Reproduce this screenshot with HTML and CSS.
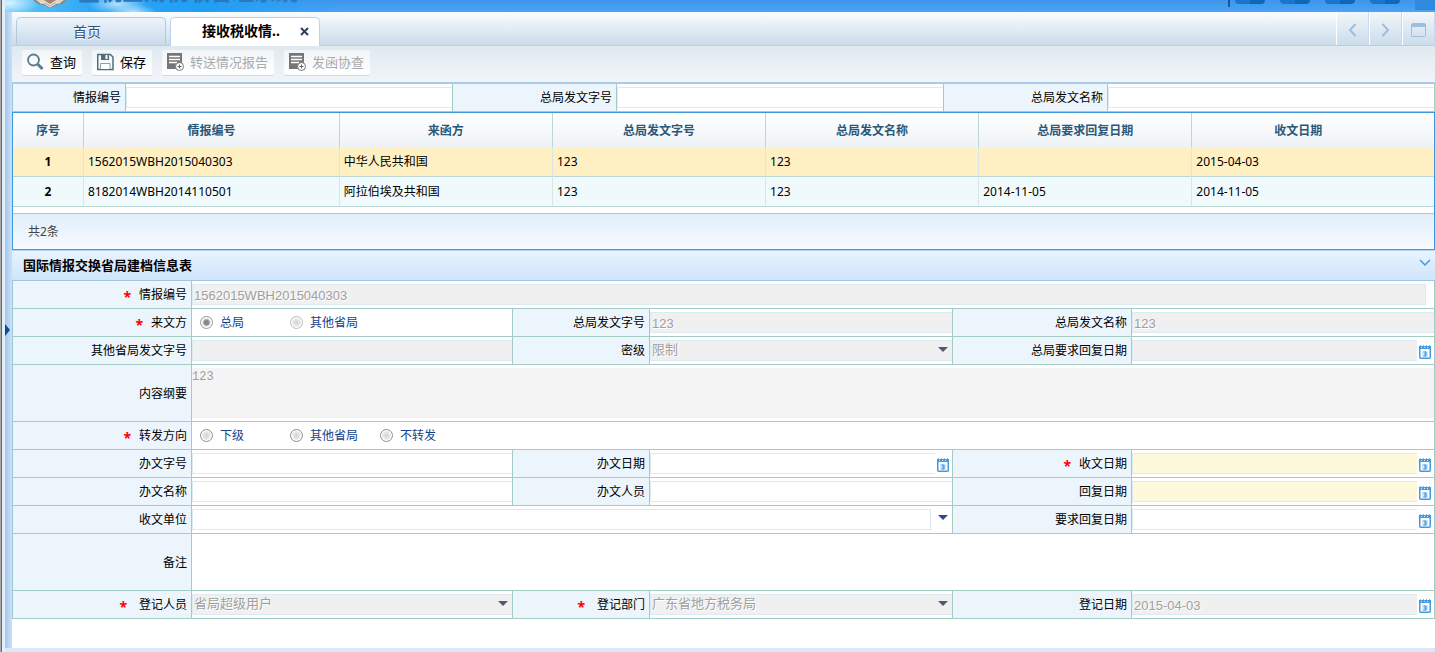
FILE: index.html
```html
<!DOCTYPE html>
<html lang="zh-CN">
<head>
<meta charset="utf-8">
<title>接收税收情报</title>
<link rel="stylesheet" href="styles.css">
</head>
<body>
<svg class="sprite" aria-hidden="true">
  <symbol id="calendar" viewBox="0 0 12 14">
    <rect x=".75" y="1.750" width="10.500" height="11.500" rx="1" fill="#fff" stroke="#429be0" stroke-width="1.500"/>
    <path d="M0 1h12v3H0z" fill="#429be0"/>
    <path d="M1 .5h1M4 .5h1M7 .5h1M10 .5h1" stroke="#7dbcec"/>
    <path d="M2 2.500h1M5 2.500h1M8 2.500h1" stroke="#d6ebfb"/>
    <path d="M3 6h6v6H3z" fill="#d3e8fa"/>
    <path d="M4.500 7h2.500v4H4.500M5 9h2" fill="none" stroke="#3b8fd6"/>
  </symbol>
  <symbol id="report" viewBox="0 0 17 18">
    <path d="M0 0h15v16H0z" fill="#767676"/>
    <path d="M2 3.500h11M2 6.500h11M2 9.500h8" stroke="#fff" stroke-width="1.300"/>
    <circle cx="12.500" cy="13.500" r="4" fill="#fff" stroke="#777"/>
    <path d="M10.500 13.500h4M12.500 11.500v4" stroke="#666"/>
  </symbol>
</svg>
<div class="window">
  <div class="window-edge"></div>
  <div class="app">
    <header class="banner">
      <svg class="emblem" viewBox="0 0 36 12" aria-hidden="true">
        <path d="M1 0l5 4 5 1 7 3 7-3 5-1 5-4z" fill="#8d8580"/>
        <path d="M4 0l4 3 5 0 5 3 5-3 5 0 4-3z" fill="#ddd5cc"/>
        <path d="M12 0l6 4 6-4z" fill="#a3836a"/>
        <path d="M8 3l3 0 7 4 7-4 3 0" fill="none" stroke="#f3eee9"/>
      </svg>
      <div class="system-name">金税三期税收管理系统</div>
      <div class="banner-tools">
        <i class="banner-line"></i><i class="pill"></i><i class="pill"></i><i class="pill"></i><i class="pill"></i><i class="corner"></i>
      </div>
    </header>
    <div class="body">
      <div class="splitter"><i class="splitter-arrow"></i></div>
      <main class="main">
        <nav class="tabs">
          <button class="tab" type="button">首页</button>
          <div class="tab active"><button class="tab-name" type="button">接收税收情..</button>
            <button class="tab-close" type="button" aria-label="关闭"><svg width="9" height="9" viewBox="0 0 9 9"><path d="M1 1l7 7M8 1L1 8" stroke="#34415e" stroke-width="2"/></svg></button>
          </div>
          <div class="tab-tools">
            <button type="button" aria-label="向左"><svg width="9" height="14" viewBox="0 0 9 14"><path d="M7.500 1L2 7l5.500 6" fill="none" stroke="#9bbfe1" stroke-width="2"/></svg></button>
            <button type="button" aria-label="向右"><svg width="9" height="14" viewBox="0 0 9 14"><path d="M1.500 1L7 7l-5.500 6" fill="none" stroke="#9bbfe1" stroke-width="2"/></svg></button>
            <button type="button" aria-label="最大化"><svg width="15" height="14" viewBox="0 0 15 14"><rect x=".5" y=".5" width="14" height="13" rx="1" fill="none" stroke="#9bbfe1"/><path d="M0 1h15v3H0z" fill="#9bbfe1"/></svg></button>
          </div>
        </nav>
        <div class="toolbar">
          <button type="button"><svg width="18" height="18" viewBox="0 0 18 18"><circle cx="6.500" cy="7" r="5.500" fill="none" stroke="#5e7c90" stroke-width="1.800"/><path d="M10.500 11l5 5" stroke="#5e7c90" stroke-width="3"/></svg>查询</button>
          <button type="button"><svg width="18" height="18" viewBox="0 0 18 18"><path d="M.75 1.500h12.500L16 4v12.500H.75z" fill="none" stroke="#506d80" stroke-width="1.500"/><path d="M4 1h8v6H4z" fill="#506d80"/><path d="M8.500 2h2v4h-2z" fill="#fff"/><path d="M3.500 16v-5.500h9.500V16" fill="#fff" stroke="#8ba1b0"/></svg>保存</button>
          <button type="button" disabled><svg width="18" height="18"><use href="#report" width="17" height="18"/></svg>转送情况报告</button>
          <button type="button" disabled><svg width="18" height="18"><use href="#report" width="17" height="18"/></svg>发函协查</button>
        </div>
        <form class="search">
          <label for="q1">情报编号</label><div class="cell"><input id="q1" type="text"></div>
          <label for="q2">总局发文字号</label><div class="cell"><input id="q2" type="text"></div>
          <label for="q3">总局发文名称</label><div class="cell"><input id="q3" type="text"></div>
        </form>
        <section class="results">
          <table>
            <colgroup><col class="c-no"><col class="c-id"><col class="c-mid"><col class="c-mid"><col class="c-mid"><col class="c-mid"><col></colgroup>
            <thead><tr><th>序号</th><th>情报编号</th><th>来函方</th><th>总局发文字号</th><th>总局发文名称</th><th>总局要求回复日期</th><th>收文日期</th></tr></thead>
            <tbody>
              <tr class="selected"><td>1</td><td>1562015WBH2015040303</td><td>中华人民共和国</td><td>123</td><td>123</td><td></td><td>2015-04-03</td></tr>
              <tr><td>2</td><td>8182014WBH2014110501</td><td>阿拉伯埃及共和国</td><td>123</td><td>123</td><td>2014-11-05</td><td>2014-11-05</td></tr>
            </tbody>
          </table>
          <div class="total">共2条</div>
        </section>
        <section class="record">
          <div class="record-head"><h2>国际情报交换省局建档信息表</h2>
            <button type="button" aria-label="折叠"><svg width="12" height="8" viewBox="0 0 12 8"><path d="M1 1l5 5 5-5" fill="none" stroke="#429be0" stroke-width="1.500"/></svg></button>
          </div>
          <form class="form">
            <label for="f1"><b>*</b>情报编号</label><div class="cell wide inset"><input id="f1" type="text" value="1562015WBH2015040303" disabled></div>

            <div class="label" id="l2"><b>*</b>来文方</div>
            <div class="cell radios" role="radiogroup" aria-labelledby="l2">
              <label><input type="radio" name="from" checked disabled>总局</label><label><input type="radio" name="from" disabled>其他省局</label>
            </div>
            <label for="f3">总局发文字号</label><div class="cell"><input id="f3" type="text" value="123" disabled></div>
            <label for="f4">总局发文名称</label><div class="cell"><input id="f4" type="text" value="123" disabled></div>

            <label for="f5">其他省局发文字号</label><div class="cell"><input id="f5" type="text" disabled></div>
            <label for="f6">密级</label><div class="cell pick off"><select id="f6" disabled><option>限制</option></select></div>
            <label for="f7">总局要求回复日期</label><div class="cell date"><input id="f7" type="text" disabled><svg><use href="#calendar"/></svg></div>

            <label for="f8">内容纲要</label><div class="cell wide"><textarea id="f8" disabled>123</textarea></div>

            <div class="label" id="l9"><b>*</b>转发方向</div>
            <div class="cell wide radios" role="radiogroup" aria-labelledby="l9">
              <label><input type="radio" name="to">下级</label><label><input type="radio" name="to">其他省局</label><label><input type="radio" name="to">不转发</label>
            </div>

            <label for="f10">办文字号</label><div class="cell"><input id="f10" type="text"></div>
            <label for="f11">办文日期</label><div class="cell date"><input id="f11" type="text"><svg><use href="#calendar"/></svg></div>
            <label for="f12"><b>*</b>收文日期</label><div class="cell date"><input id="f12" class="needed" type="text"><svg><use href="#calendar"/></svg></div>

            <label for="f13">办文名称</label><div class="cell"><input id="f13" type="text"></div>
            <label for="f14">办文人员</label><div class="cell"><input id="f14" type="text"></div>
            <label for="f15">回复日期</label><div class="cell date"><input id="f15" class="needed" type="text"><svg><use href="#calendar"/></svg></div>

            <label for="f16">收文单位</label><div class="cell half combo"><input id="f16" type="text"><button type="button" aria-label="展开"></button></div>
            <label for="f17">要求回复日期</label><div class="cell date"><input id="f17" type="text"><svg><use href="#calendar"/></svg></div>

            <label for="f18">备注</label><div class="cell wide"><textarea id="f18"></textarea></div>

            <label for="f19" class="loose"><b>*</b>登记人员</label><div class="cell pick off"><select id="f19" disabled><option>省局超级用户</option></select></div>
            <label for="f20" class="loose"><b>*</b>登记部门</label><div class="cell pick off"><select id="f20" disabled><option>广东省地方税务局</option></select></div>
            <label for="f21">登记日期</label><div class="cell date"><input id="f21" type="text" value="2015-04-03" disabled><svg><use href="#calendar"/></svg></div>
          </form>
        </section>
      </main>
    </div>
    <footer class="bottom-bar"></footer>
  </div>
</div>
</body>
</html>
```
FILE: styles.css
```css
* { box-sizing: border-box; }

body {
  margin: 0;
  font: 12px/18px "Noto Sans", "Noto Sans CJK SC", sans-serif;
  color: #000;
  background: #fff;
}

button, input, select, textarea { margin: 0; padding: 0; border: 0; font: inherit; color: inherit; background: none; }
svg { flex: none; }
.sprite { position: absolute; width: 0; height: 0; }

.window { display: flex; min-height: 100vh; }
.window-edge { width: 5px; flex: none; background: linear-gradient(90deg, #aaa 0 1px, #666 1px 2px, #e4eef8 2px); }
.app { flex: 1; min-width: 0; display: flex; flex-direction: column; }

/* banner */
.banner {
  display: flex;
  height: 12px;
  overflow: hidden;
  background:
    radial-gradient(ellipse 30px 12px at 4px 3px, #d8f3ff, transparent),
    radial-gradient(ellipse 30px 10px at 112px 4px, #b5e2fc, transparent),
    radial-gradient(ellipse 24px 8px at 128px 12px, #b5e2fc, transparent),
    linear-gradient(90deg, #64c9f8 0, #2ba5f6 90px, #1f9ff5 200px, transparent 340px),
    linear-gradient(#3f95e8, #49a4f8);
}
.emblem { width: 36px; height: 12px; margin-left: 27px; }
.system-name { margin: -20px 0 0 10px; font-size: 22px; line-height: 22px; font-weight: 700; color: #2a78bd; white-space: nowrap; }
.banner-tools { display: flex; gap: 15px; margin-left: auto; }
.banner-line { width: 2px; height: 7px; margin-right: -10px; background: #1257a0; }
.pill { width: 30px; height: 4px; border-radius: 0 0 5px 5px; background: linear-gradient(90deg, #1976ca 50%, #0e68b8 50%); }
.corner { width: 20px; height: 10px; background: #2e8be0; }

.body { flex: 1; display: flex; }
.splitter { width: 7px; flex: none; display: flex; align-items: center; background: linear-gradient(90deg, #a5c8ec, #c9e1f8); }
.splitter-arrow { border: 6px solid transparent; border-left: 5px solid #0e4d92; border-right: 0; }
.main { flex: 1; min-width: 0; }
.bottom-bar { height: 4px; background: #d9e9f7; }

/* tabs */
.tabs { display: flex; align-items: flex-end; gap: 4px; height: 34px; padding-left: 4px; background: linear-gradient(#fafdff, #cbdbea); border-bottom: 1px solid #b3cfe9; }
.tab {
  display: flex; align-items: center; justify-content: center;
  width: 150px; height: 28px; padding-right: 8px;
  border: 1px solid #b5c9dc; border-bottom: 0; border-radius: 5px 5px 0 0;
  background: linear-gradient(#edf4fa, #c9daeb);
  font-size: 14px; color: #32507c; text-shadow: 0 1px #fff;
}
.tab.active { height: 29px; margin-bottom: -1px; gap: 20px; padding: 0 0 2px 21px; background: #fff; border-color: #b9d3ee; color: #000; }
.tab-name { font-weight: 700; }
.tab-close { display: flex; }
.tab-tools { display: flex; align-self: stretch; margin-left: auto; }
.tab-tools button { width: 33px; display: flex; align-items: center; justify-content: center; padding-top: 2px; border-left: 1px solid #fff; border-right: 1px solid #c8dbed; background: linear-gradient(#f2f7fb, #cbdcea); }

/* toolbar */
.toolbar { display: flex; align-items: center; gap: 10px; height: 38px; padding: 0 10px 2px; background: linear-gradient(#dfe9f0, #f1f5f9); border-bottom: 2px solid #a7cbe8; }
.toolbar button { display: flex; align-items: center; gap: 5px; height: 26px; padding: 0 6px 2px 5px; border-radius: 2px; background: linear-gradient(#f1f5f8, #fff); border-bottom: 1px solid #d2d6d9; font-size: 13px; white-space: nowrap; }
.toolbar button:disabled { color: #aaa; }

/* label and field cells */
.search, .form { display: grid; border-left: 1px solid #a0c8d2; }
.search { grid-template-columns: 113px 1fr 164px 1fr 164px 1fr; }
.form { grid-template-columns: 179px 321fr 137px 303fr 179px 303fr; }
.search > label, .form > label, .form > .label {
  display: flex; align-items: center; justify-content: flex-end;
  padding: 1px 4px 0 0;
  background: #edf5fc;
}
.search > *, .form > * { border-right: 1px solid #a4cbc4; border-bottom: 1px solid #a4cbc4; }
.form b { margin-right: 8px; padding-top: 4px; font-size: 14px; line-height: 18px; color: #f00; }
.form .loose b { margin-right: 12px; }
.cell { display: flex; align-items: center; min-width: 0; min-height: 28px; background: #fff; }
.wide { grid-column: span 5; }
.half { grid-column: span 3; }
.inset { padding-right: 8px; }
.cell > input, .cell > select { flex: 1; min-width: 0; height: 21px; padding: 1px 1px 0; border: 1px solid #dceaf2; border-right: 0; background: #fff; font-family: "Liberation Sans", "Noto Sans CJK SC", sans-serif; font-size: 13px; }
.inset > input { border-right: 1px solid #dceaf2; }
.cell > :disabled { opacity: 1; color: #a0a0a0; background: #f0f0f0; text-shadow: 1px 1px #fff; }
.cell > .needed { background: #fff9dc; }
.date svg { width: 12px; height: 14px; margin: 2px 3px 0 2px; }
.pick { position: relative; }
.pick > select { appearance: none; padding: 0 24px 3px 1px; }
.pick::after, .combo button::after { content: ""; display: block; border: 5px solid transparent; border-top-color: #274b8c; border-bottom: 0; }
.pick::after { position: absolute; right: 4px; top: 10px; border-top-color: #505a70; }
.combo > input { border-right: 1px solid #dceaf2; }
.combo button { padding: 0 4px 5px 7px; }
.cell textarea { flex: 1; align-self: stretch; min-width: 0; height: 50px; margin: 3px 0; padding-top: 1px; resize: none; font: 12px/16px "Liberation Mono", "Noto Sans CJK SC", monospace; }
.cell > textarea:disabled { background: #f4f4f4; text-shadow: none; }
.radios { padding-left: 8px; }
.radios label { display: flex; align-items: center; gap: 7px; width: 90px; color: #15428b; }
.radios input { appearance: none; width: 13px; height: 13px; border: 1px solid #8e8f8f; border-radius: 50%; background: radial-gradient(circle, #d3d3d8, #f6f6f6 75%); box-shadow: inset 0 0 0 1px #fff; }
.radios input:disabled { border-color: #bcbcbc; }
.radios input:checked { border-color: #999; background: radial-gradient(circle, #888 0 2px, #aaa 3px, #eee 4px); }

/* result list */
.results { border: 1px solid #3e97dc; }
.results table { width: 100%; table-layout: fixed; border-collapse: separate; border-spacing: 0; }
.c-no { width: 71px; }
.c-id { width: 18%; }
.c-mid { width: 15%; }
.results th { height: 34px; padding: 2px 0 0; background: linear-gradient(#fff, #eef2f6); border-right: 1px solid #bcd8d5; color: #2b5878; }
.results td { height: 30px; padding: 0 4px; background: #f0fafd; border-right: 1px solid #dae6e6; border-bottom: 1px solid #bcd8d5; }
.results td:first-child { text-align: center; font-weight: 700; }
.results .selected td { background: #fff0c4; }
.results th:last-child, .results td:last-child { border-right: 0; }
.results th:last-child { padding-right: 30px; }
.total { height: 36px; margin-top: 6px; padding-left: 15px; line-height: 36px; border-top: 1px solid #a6cae8; background: linear-gradient(#e1eefa, #f7fafe); color: #444; }

/* record form */
.record-head { display: flex; align-items: center; justify-content: space-between; height: 31px; padding: 0 4px 2px 11px; background: linear-gradient(#e8f3ff, #cfe5fa); border-top: 1px solid #b5d6f4; border-bottom: 1px solid #a0c5e0; }
.record-head h2 { margin: 0; font-size: 13px; line-height: 18px; }
.record-head button { display: flex; padding-bottom: 3px; }
```
